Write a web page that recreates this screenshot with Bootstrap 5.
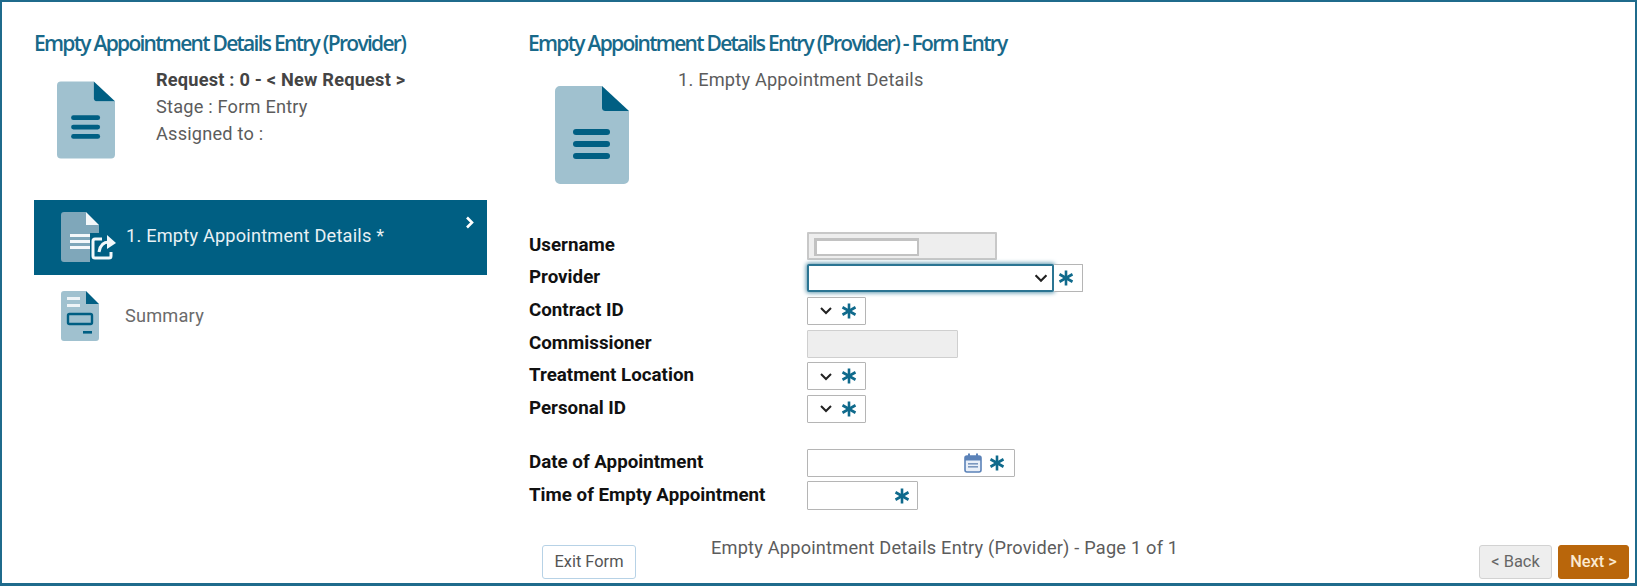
<!DOCTYPE html>
<html lang="en">
<head>
<meta charset="utf-8">
<title>Empty Appointment Details Entry</title>
<link href="https://cdn.jsdelivr.net/npm/bootstrap@5.3.0/dist/css/bootstrap.min.css" rel="stylesheet">
<style>
html,body{height:586px;overflow:hidden;background:#fff}
body{font-family:Roboto,"Liberation Sans",sans-serif;font-size:18.2px;letter-spacing:.2px;color:#5c5c5c}
.frame{height:586px;border:2px solid #1f6b8c;border-bottom-width:3px;padding:0 6px 4px 32px}
.leftcol{width:453px;flex:none;padding-top:27px}
.rightcol{margin-left:41px;flex:1 1 auto;min-width:0;padding-top:27px}
.ttl{font-family:"Open Sans",sans-serif;font-size:21px;font-weight:600;letter-spacing:-1.72px;color:#18698a;line-height:28px;margin:0}
.info{line-height:27.2px}
.info b{color:#444;font-weight:700}
.lefthead{margin-top:-1px;height:144px;padding-left:23px}
.leftdoc{flex:none;margin-top:25px}
.leftinfo{margin-left:41px;padding-top:10px}
.stepitem{height:75px;padding-left:27px;color:#666;border-radius:0}
.stepitem.sel{background:#005f83;color:#e8f1f5}
.steptext{margin-left:9px}
.seltext{padding-bottom:3px}
.stepcheck{position:absolute;right:12px;top:16px}
.steptwo{margin-top:7px;height:68px}
.sumicon{flex:none;margin-right:17px}
.sumtext{color:#6b6b6b}
.righthead{height:172.5px;padding-left:27px;margin-top:-1px}
.rightdoc{flex:none;margin-top:30px}
.rightinfo{margin-left:49px;padding-top:10px;line-height:27px;color:#5c5c5c}
.frow{height:32.6px;padding-left:1px}
.flabel{width:278px;flex:none;font-weight:700;font-size:18.75px;letter-spacing:0;color:#111}
.fbox{border:1px solid #b5b5b5;border-radius:1px;height:28px;margin-top:2px;background:#fff}
.ubox{width:190px;background:#eee;padding:5px 0 5px 7px;border-width:2px;border-color:#c8c8c8}
.uinner{width:105px;height:18px;background:#fff;border:2px solid #c2c2c2;border-width:3px 2px 2px 3px;margin-top:-1px;margin-left:-2px}
.pselect{width:247px;height:28px;margin-top:2px;padding:0;border:2px solid #2b7593;border-radius:2px;box-shadow:0 0 4px 1px #5d97ae;background-position:right 3px center;background-size:16px 12px;background-image:url("data:image/svg+xml,%3csvg xmlns='http://www.w3.org/2000/svg' viewBox='0 0 14 11'%3e%3cpath d='M2 3l5 5 5-5' fill='none' stroke='%23222' stroke-width='2'/%3e%3c/svg%3e")}
.pstar{width:29px;border-left:0;padding-left:4px}
.sbox{width:59px;padding-left:11px;gap:8px}
.sel-mini{width:14px;height:11px;flex:none}
.cbox{width:151px;background:#eee;border-color:#cfcfcf}
.dbox{width:208px;padding-right:9px;gap:7px;justify-content:flex-end}
.tbox{width:111px;padding-right:7px;justify-content:flex-end;height:29px}
.spacer{height:22px}
.foot{padding-left:14px;margin-top:auto}
.exitbtn,.backbtn,.nextbtn{height:34px;padding:0;font-size:16.4px;letter-spacing:0;border-radius:3px;line-height:32px}
.exitbtn{width:94px;background:#fff;border:1.5px solid #b7d2e6;color:#555;flex:none}
.foottxt{margin-left:75px;margin-top:-9px;white-space:nowrap;color:#5c5c5c;line-height:24px}
.backbtn{width:73px;background:#eee;border:1px solid #d2d2d2;color:#666;flex:none}
.nextbtn{width:71px;background:#b9660b;border:1px solid #b9660b;color:#fbe9d0;font-weight:500;flex:none;margin-left:6px}
</style>
</head>
<body>
<svg width="0" height="0" class="position-absolute">
<defs>
<symbol id="ast" viewBox="0 0 16 16"><g stroke="#0f6a8c" stroke-width="2.6"><line x1="8" y1="0.5" x2="8" y2="15.5"/><line x1="1.5" y1="4.25" x2="14.5" y2="11.75"/><line x1="14.5" y1="4.25" x2="1.5" y2="11.75"/></g></symbol>
<symbol id="chev" viewBox="0 0 14 11"><path d="M2 3l5 5 5-5" fill="none" stroke="#222" stroke-width="2"/></symbol>
<symbol id="docfile" viewBox="0 0 74 98"><path d="M5 0H47V22a3 3 0 0 0 3 3H74V93a5 5 0 0 1-5 5H5a5 5 0 0 1-5-5V5a5 5 0 0 1 5-5z" fill="#a0c1cf"/><path d="M47 0L74 25H50a3 3 0 0 1-3-3z" fill="#005f83"/><g fill="#005f83"><rect x="18" y="43" width="37" height="6" rx="3"/><rect x="18" y="55" width="37" height="6" rx="3"/><rect x="18" y="67" width="37" height="6" rx="3"/></g></symbol>
</defs>
</svg>
<div class="frame d-flex">
  <div class="leftcol">
    <h2 class="ttl">Empty Appointment Details Entry (Provider)</h2>
    <div class="lefthead d-flex">
      <svg class="leftdoc" width="58" height="78"><use href="#docfile"/></svg>
      <div class="info leftinfo">
        <div><b>Request : 0 - &lt; New Request &gt;</b></div>
        <div>Stage : Form Entry</div>
        <div>Assigned to :</div>
      </div>
    </div>
    <div class="stepitem sel d-flex align-items-center position-relative">
      <svg width="56" height="52" viewBox="0 0 56 52" class="flex-shrink-0">
        <path d="M3 0H25V13H38V50H3a3 3 0 0 1-3-3V3a3 3 0 0 1 3-3z" fill="#7fa7ba"/>
        <path d="M25 0L38 13H25z" fill="#f4f8fa"/>
        <g fill="#f4f8fa"><rect x="9" y="22" width="20" height="3"/><rect x="9" y="28" width="20" height="3"/><rect x="9" y="34" width="20" height="3"/></g>
        <path d="M29 21h26v29H29z" fill="#005f83"/>
        <path d="M41 27H34a2 2 0 0 0-2 2V44a2 2 0 0 0 2 2H48a2 2 0 0 0 2-2V40" fill="none" stroke="#f4f8fa" stroke-width="3"/>
        <path d="M38 40c1-7 5-10 10-10" fill="none" stroke="#f4f8fa" stroke-width="3"/>
        <path d="M46 23l9 8-9 6z" fill="#f4f8fa"/>
      </svg>
      <span class="steptext seltext">1. Empty Appointment Details *</span>
      <svg class="stepcheck" width="10" height="13" viewBox="0 0 10 13"><path d="M2 1.5l5 5-5 5" fill="none" stroke="#fff" stroke-width="2.6"/></svg>
    </div>
    <div class="stepitem steptwo d-flex align-items-center">
      <svg width="38" height="50" viewBox="0 0 38 50" class="sumicon">
        <path d="M3 0H25V13H38V47a3 3 0 0 1-3 3H3a3 3 0 0 1-3-3V3a3 3 0 0 1 3-3z" fill="#a0c1cf"/>
        <path d="M25 0L38 13H25z" fill="#005f83"/>
        <rect x="6" y="6" width="13" height="3" fill="#eef4f7"/><rect x="6" y="13" width="13" height="3" fill="#eef4f7"/>
        <rect x="7" y="23" width="24" height="10" rx="1.5" fill="none" stroke="#005f83" stroke-width="2.4"/>
        <rect x="22" y="40" width="9" height="2.6" fill="#005f83"/>
      </svg>
      <span class="steptext sumtext">Summary</span>
    </div>
  </div>
  <div class="rightcol d-flex flex-column">
    <h2 class="ttl">Empty Appointment Details Entry (Provider) - Form Entry</h2>
    <div class="righthead d-flex">
      <svg class="rightdoc" width="74" height="98"><use href="#docfile"/></svg>
      <div class="rightinfo">1. Empty Appointment Details</div>
    </div>
    <form class="m-0">
      <div class="frow d-flex align-items-center"><div class="flabel">Username</div><div class="fbox ubox"><div class="uinner"></div></div></div>
      <div class="frow d-flex align-items-center"><div class="flabel">Provider</div><select class="form-select pselect" aria-label="Provider"></select><div class="fbox pstar d-flex align-items-center"><svg width="16" height="16"><use href="#ast"/></svg></div></div>
      <div class="frow d-flex align-items-center"><div class="flabel">Contract ID</div><div class="fbox sbox d-flex align-items-center"><svg class="sel-mini"><use href="#chev"/></svg><svg width="16" height="16"><use href="#ast"/></svg></div></div>
      <div class="frow d-flex align-items-center"><div class="flabel">Commissioner</div><div class="fbox cbox"></div></div>
      <div class="frow d-flex align-items-center"><div class="flabel">Treatment Location</div><div class="fbox sbox d-flex align-items-center"><svg class="sel-mini"><use href="#chev"/></svg><svg width="16" height="16"><use href="#ast"/></svg></div></div>
      <div class="frow d-flex align-items-center"><div class="flabel">Personal ID</div><div class="fbox sbox d-flex align-items-center"><svg class="sel-mini"><use href="#chev"/></svg><svg width="16" height="16"><use href="#ast"/></svg></div></div>
      <div class="spacer"></div>
      <div class="frow d-flex align-items-center"><div class="flabel">Date of Appointment</div><div class="fbox dbox d-flex align-items-center">
        <svg width="18" height="20" viewBox="0 0 18 20"><rect x="1" y="3" width="16" height="16" rx="2" fill="#e9eff8" stroke="#5b82b8" stroke-width="1.6"/><rect x="1" y="3" width="16" height="4.5" fill="#5b82b8"/><rect x="4" y="0.5" width="2" height="4" fill="#5b82b8"/><rect x="12" y="0.5" width="2" height="4" fill="#5b82b8"/><g fill="#7b97bf"><rect x="4" y="10" width="10" height="1.6"/><rect x="4" y="13" width="10" height="1.6"/></g></svg>
        <svg width="16" height="16"><use href="#ast"/></svg></div></div>
      <div class="frow d-flex align-items-center"><div class="flabel">Time of Empty Appointment</div><div class="fbox tbox d-flex align-items-center"><svg width="16" height="16"><use href="#ast"/></svg></div></div>
    </form>
    <div class="foot d-flex align-items-start">
      <button type="button" class="btn exitbtn">Exit Form</button>
      <div class="foottxt flex-grow-1">Empty Appointment Details Entry (Provider) - Page 1 of 1</div>
      <button type="button" class="btn backbtn">&lt; Back</button>
      <button type="button" class="btn nextbtn">Next &gt;</button>
    </div>
  </div>
</div>
<script src="https://cdn.jsdelivr.net/npm/bootstrap@5.3.0/dist/js/bootstrap.bundle.min.js"></script>
</body>
</html>
